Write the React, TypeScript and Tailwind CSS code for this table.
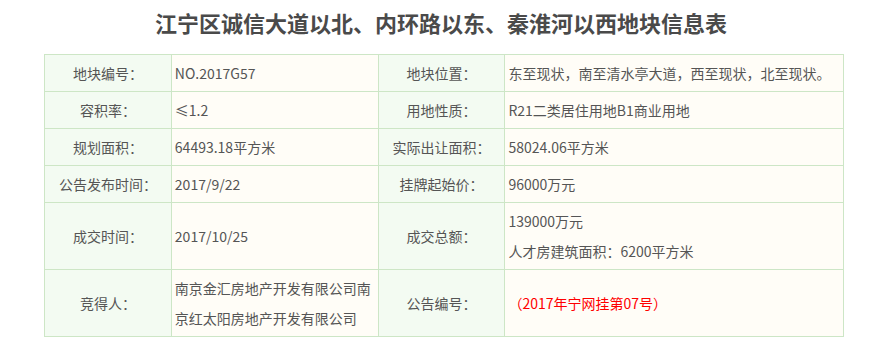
import React from 'react';

type Cell = { label: string; value: React.ReactNode };

const rows: [Cell, Cell, boolean?][] = [
    [
        { label: '地块编号：', value: 'NO.2017G57' },
        { label: '地块位置：', value: '东至现状，南至清水亭大道，西至现状，北至现状。' },
    ],
    [
        { label: '容积率：', value: '≤1.2' },
        { label: '用地性质：', value: 'R21二类居住用地B1商业用地' },
    ],
    [
        { label: '规划面积：', value: '64493.18平方米' },
        { label: '实际出让面积：', value: '58024.06平方米' },
    ],
    [
        { label: '公告发布时间：', value: '2017/9/22' },
        { label: '挂牌起始价：', value: '96000万元' },
    ],
    [
        { label: '成交时间：', value: '2017/10/25' },
        {
            label: '成交总额：',
            value: (
                <>
                    <div>139000万元</div>
                    <div>人才房建筑面积：6200平方米</div>
                </>
            ),
        },
    ],
    [
        { label: '竞得人：', value: '南京金汇房地产开发有限公司南京红太阳房地产开发有限公司' },
        { label: '公告编号：', value: <span className="text-[#ff0000]">（2017年宁网挂第07号）</span> },
    ],
];

export default function App() {
    return (
        <div className="w-[882px] h-[357px] bg-white font-['Noto_Sans_CJK_SC','Microsoft_YaHei',sans-serif] text-[#555]">
            {/* Title */}
            <h1 className="pt-[7px] h-[54px] text-center text-[22px] font-bold text-[#4a4a4a] leading-[30px]">
                江宁区诚信大道以北、内环路以东、秦淮河以西地块信息表
            </h1>

            {/* Info table */}
            <table className="ml-[44px] w-[800px] border-collapse text-[14px] leading-[30px]">
                <colgroup>
                    <col className="w-[127px]" />
                    <col className="w-[207px]" />
                    <col className="w-[127px]" />
                    <col className="w-[339px]" />
                </colgroup>
                <tbody>
                    {rows.map(([a, b], i) => (
                        <tr key={i}>
                            <td className="border border-[#cde6c6] bg-[#f3fbf2] text-center py-[3px]">{a.label}</td>
                            <td className="border border-[#cde6c6] bg-[#fffdf7] px-[3px] py-[3px] break-all">{a.value}</td>
                            <td className="border border-[#cde6c6] bg-[#f3fbf2] text-center py-[3px]">{b.label}</td>
                            <td className="border border-[#cde6c6] bg-[#fffdf7] px-[3px] py-[3px]">{b.value}</td>
                        </tr>
                    ))}
                </tbody>
            </table>
        </div>
    );
}
